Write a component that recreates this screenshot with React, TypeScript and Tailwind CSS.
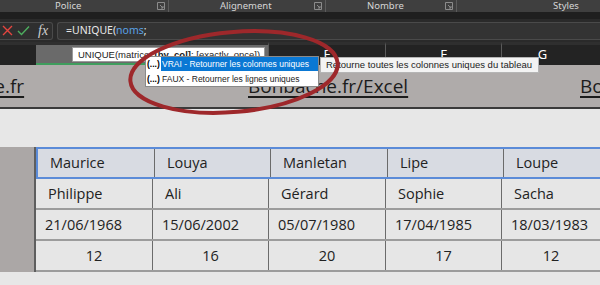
import React from 'react';

const rows = [
  ['Maurice', 'Louya', 'Manletan', 'Lipe', 'Loupe'],
  ['Philippe', 'Ali', 'Gérard', 'Sophie', 'Sacha'],
  ['21/06/1968', '15/06/2002', '05/07/1980', '17/04/1985', '18/03/1983'],
  ['12', '16', '20', '17', '12'],
];

const colWidths = ['w-[116px]', 'w-[116px]', 'w-[117px]', 'w-[116px]', 'flex-1'];

function Launcher() {
  return (
    <svg width="8" height="8" viewBox="0 0 8 8" className="text-[#8c8c8c]">
      <path d="M0.5 0.5h7v7h-7z" fill="none" stroke="currentColor" strokeWidth="1" />
      <path d="M3 3l3 3M6 4v2h-2" fill="none" stroke="currentColor" strokeWidth="1" />
    </svg>
  );
}

function RibbonLabels() {
  return (
    <div className="flex h-[12px] bg-[#3f3f3f] text-[9.5px] leading-[12px] text-[#d6d6d6] font-['Noto_Sans',sans-serif]">
      <div className="w-[169px] flex items-center border-r border-[#5c5c5c]">
        <span className="ml-[55px]">Police</span>
        <span className="ml-auto mr-[3px] flex"><Launcher /></span>
      </div>
      <div className="w-[157px] flex items-center border-r border-[#5c5c5c]">
        <span className="ml-[51px]">Alignement</span>
        <span className="ml-auto mr-[3px] flex"><Launcher /></span>
      </div>
      <div className="w-[131px] flex items-center border-r border-[#5c5c5c]">
        <span className="ml-[41px]">Nombre</span>
        <span className="ml-auto mr-[3px] flex"><Launcher /></span>
      </div>
      <div className="flex-1 flex items-center">
        <span className="ml-[96px]">Styles</span>
      </div>
    </div>
  );
}

function FormulaBar() {
  return (
    <div className="flex items-center gap-[4px] h-[23px] bg-[#2a2a2a]">
      <div className="flex items-center h-[18px] w-[53px] rounded-r-[3px] border border-l-0 border-[#4a4a4a] bg-[#2f2f2f]">
        <svg width="11" height="11" viewBox="0 0 11 11" className="ml-[2px]">
          <path d="M1 1l9 9M10 1l-9 9" stroke="#e5453f" strokeWidth="1.4" />
        </svg>
        <svg width="13" height="11" viewBox="0 0 13 11" className="ml-[4px]">
          <path d="M1 6l3.5 3.5L12 1.5" fill="none" stroke="#4dae5f" strokeWidth="1.4" />
        </svg>
        <span className="ml-[8px] text-[14px] italic text-[#d0d0d0] font-['Liberation_Serif',serif] leading-none">fx</span>
      </div>
      <div className="flex-1 h-[18px] rounded-l-[3px] border border-r-0 border-[#4a4a4a] bg-[#333333] flex items-center pl-[8px] text-[10.5px] text-[#e8e8e8] font-['Noto_Sans',sans-serif]">
        =UNIQUE(<span className="text-[#5aa2e6]">noms</span>;
      </div>
    </div>
  );
}

function ColumnHeaders() {
  return (
    <div className="flex h-[23px] bg-[#232323] text-white text-[13px] font-['Noto_Sans',sans-serif]">
      <div className="w-[36px] border-t-[3px] border-[#2f2f2f]" />
      <div className="w-[232px] bg-[#6a6a6a] border-t-[3px] border-[#2f2f2f] border-b-2 border-b-[#3f9d5d]" />
      <div className="w-[117px] border-t-[3px] border-[#2f2f2f] border-l border-l-[#5a5a5a] flex items-center justify-center">E</div>
      <div className="w-[116px] border-t-[3px] border-[#2f2f2f] border-l border-l-[#5a5a5a] flex items-center justify-center">F</div>
      <div className="flex-1 border-t-[3px] border-[#2f2f2f] border-l border-l-[#5a5a5a] flex items-center justify-center pr-[17px]">G</div>
    </div>
  );
}

function Banner() {
  const link = "text-[19px] text-[#1c1c1c] underline decoration-[1.5px] underline-offset-[3px] whitespace-nowrap";
  return (
    <div className="flex items-center h-[44px] bg-[#afabaa] border-b-2 border-[#3a3a3a] overflow-hidden font-['Open_Sans',sans-serif]">
      <div className="shrink-0 w-[332px] ml-[-84px]"><span className={link}>Bonbache.fr</span></div>
      <div className="shrink-0 w-[332px]"><span className={link}>Bonbache.fr/Excel</span></div>
      <div className="shrink-0 w-[332px]"><span className={link}>Bonbache.fr</span></div>
    </div>
  );
}

function DataTable() {
  return (
    <div className="flex h-[125px] font-['Open_Sans',sans-serif] text-[14.5px] text-[#222]">
      <div className="w-[36px] bg-[#aba7a6] border-r-2 border-[#5e5e5e]" />
      <div className="flex-1 flex flex-col">
        {rows.map((row, r) => (
          <div
            key={r}
            className={
              r === 0
                ? 'flex h-[32px] bg-[#d8dbe2] border-y-2 border-l-2 border-[#5b8bd8]'
                : 'flex h-[31px] bg-[#e6e6e6] border-b-2 border-[#9c9c9c]'
            }
          >
            {row.map((cell, c) => (
              <div
                key={c}
                className={
                  colWidths[c] +
                  ' flex items-center ' +
                  (c > 0 ? 'border-l border-l-[#6b6b6b] ' : '') +
                  (r === 3 ? 'justify-center' : r === 2 ? 'pl-[9px]' : 'pl-[12px]')
                }
              >
                {cell}
              </div>
            ))}
          </div>
        ))}
      </div>
    </div>
  );
}

export default function App() {
  return (
    <div className="relative w-[600px] h-[285px] overflow-hidden bg-[#e7e7e7]">
      <RibbonLabels />
      <div className="h-[7px] bg-[#1f1f1f]" />
      <FormulaBar />
      <ColumnHeaders />
      <Banner />
      <div className="h-[38px] bg-[#e7e7e7]" />
      <DataTable />

      {/* function signature tooltip */}
      <div className="absolute left-[72px] top-[47px] w-[193px] h-[15px] bg-white border border-[#9a9a9a] pl-[5px] text-[9.5px] leading-[13px] text-[#222] font-['Liberation_Sans',sans-serif] whitespace-nowrap">
        UNIQUE(matrice; <b>[by_col]</b>; [exactly_once])
      </div>

      {/* autocomplete list */}
      <div className="absolute left-[145px] top-[56px] w-[174px] h-[31px] bg-white border border-[#8a8a8a] text-[8.5px] leading-[14px] font-['Liberation_Sans',sans-serif] whitespace-nowrap">
        <div className="flex h-[14px]">
          <span className="w-[15px] pl-[1px] font-bold text-black">(...)</span>
          <span className="flex-1 bg-[#0a78d4] text-white pl-[1px]">VRAI - Retourner les colonnes uniques</span>
        </div>
        <div className="flex h-[14px] mt-[1px]">
          <span className="w-[15px] pl-[1px] font-bold text-black">(...)</span>
          <span className="flex-1 text-[#222] pl-[1px]">FAUX - Retourner les lignes uniques</span>
        </div>
      </div>

      {/* description tooltip */}
      <div className="absolute left-[320px] top-[57px] w-[219px] h-[16px] bg-[#f3f3f3] border border-[#b5b5b5] pl-[5px] text-[9.5px] leading-[14px] text-[#222] font-['Liberation_Sans',sans-serif] whitespace-nowrap">
        Retourne toutes les colonnes uniques du tableau
      </div>

      {/* red annotation ellipse */}
      <svg className="absolute left-0 top-0 pointer-events-none" width="600" height="285" viewBox="0 0 600 285">
        <ellipse cx="234" cy="72" rx="104" ry="40" transform="rotate(-5 234 72)" fill="none" stroke="#9e282b" strokeWidth="4" />
      </svg>
    </div>
  );
}
